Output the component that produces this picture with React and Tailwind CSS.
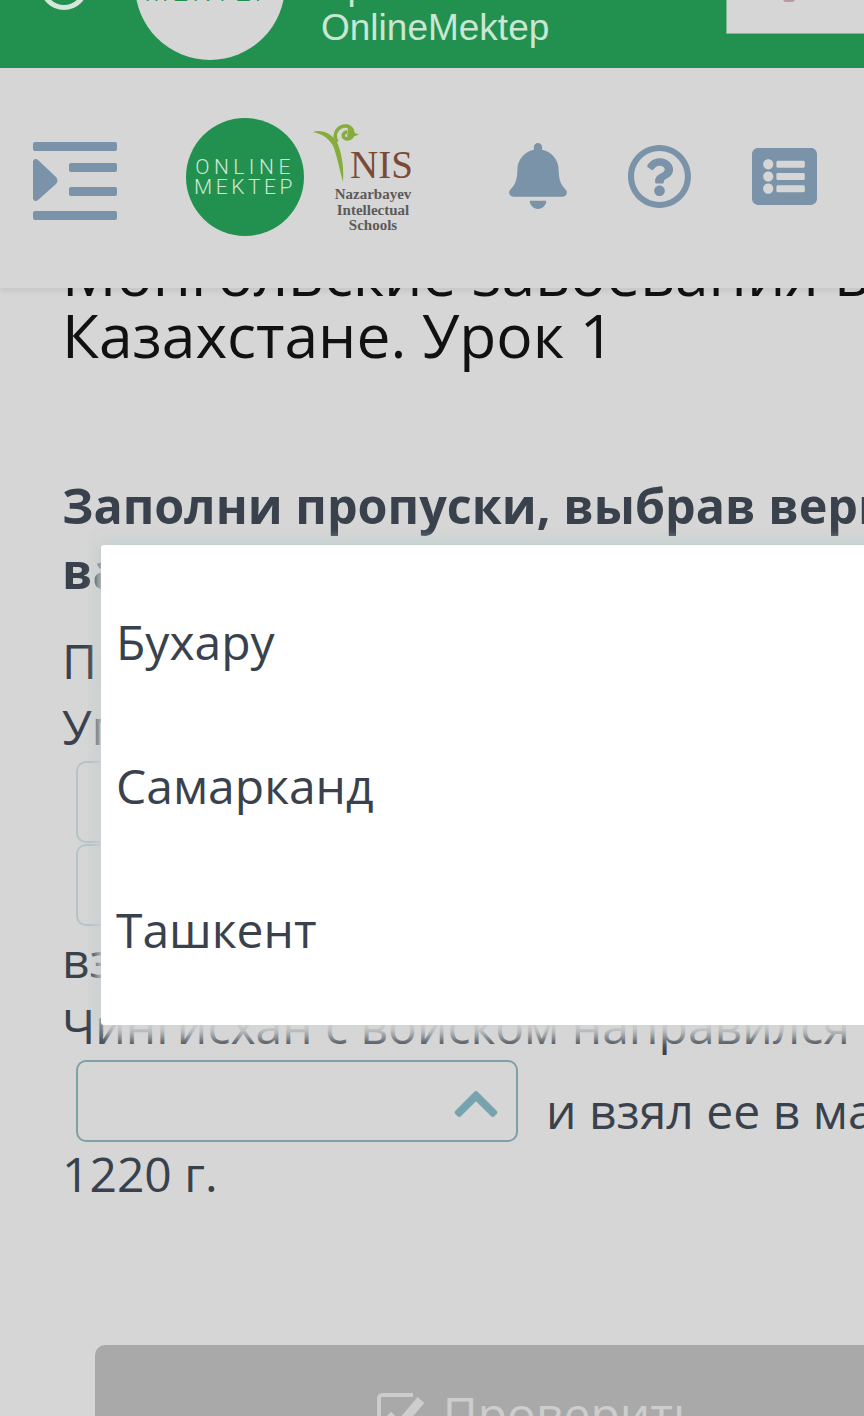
import { FaBell, FaRegQuestionCircle, FaListAlt, FaChevronUp } from "react-icons/fa";

function TopBanner() {
  return (
    <div className="relative z-20 flex h-[68px] overflow-hidden bg-[#22914f]">
      <div className="ml-[40px] mt-[-38px] h-[48px] w-[48px] rounded-full border-[5px] border-[#d6e6da]" />
      <div className="ml-[47px] mt-[-90px] flex h-[150px] w-[150px] shrink-0 items-end justify-center rounded-full bg-[#d6d6d6] pb-[54px]">
        <span className="font-['Roboto'] text-[28px] font-light leading-none tracking-[4px] text-[#22914f]">MEKTEP</span>
      </div>
      <div className="ml-[36px] mt-[-34px] font-['Liberation_Sans'] text-[37px] leading-[41px] text-[#c9e6d3]">
        <div>Привет</div>
        <div>OnlineMektep</div>
      </div>
      <div className="ml-auto flex h-[34px] w-[138px] justify-center border-b border-l border-[#7fb896] bg-[#d6d6d6]">
        <span className="ml-[-14px] mt-[-4px] h-[6px] w-[12px] rounded-full bg-[#b998a4]" />
      </div>
    </div>
  );
}

function NisLogo() {
  return (
    <div className="ml-[8px] mt-[-2px] flex w-[100px] shrink-0 flex-col self-start pt-[56px]">
      <div className="flex h-[60px] items-end">
        <svg viewBox="0 0 48 60" className="h-[60px] w-[48px] shrink-0" fill="none">
          <path d="M1 10 C10 7 20 12 25 20 C30 32 32 46 31 60 C28 50 26 38 22 26 C19 18 11 12 1 10 Z" fill="#86ad3a" />
          <path d="M25 20 C20 11 27 3 35 4 C43 6 43 17 35 17 C30 17 30 10 35 10" stroke="#86ad3a" strokeWidth="3.5" />
          <path d="M36 4 C38 8 42 12 47 12 C43 15 38 15 35 17" fill="#86ad3a" />
        </svg>
        <span className="ml-[-10px] font-['Liberation_Serif'] text-[39px] leading-[34px] text-[#7a4a34]">NIS</span>
      </div>
      <div className="mt-[5px] text-center font-['Liberation_Serif'] text-[15px] font-bold leading-[15.5px] text-[#5c5a58] pl-[22px]">
        <div>Nazarbayev</div>
        <div>Intellectual</div>
        <div>Schools</div>
      </div>
    </div>
  );
}

function Header() {
  return (
    <header className="relative z-10 flex h-[220px] items-center bg-[#d6d6d6] pl-[33px] shadow-[0_3px_6px_rgba(0,0,0,0.08)]">
      <svg viewBox="0 0 84 78" className="mt-[6px] h-[78px] w-[84px] shrink-0 fill-[#7b93a8]">
        <rect x="0" y="0" width="84" height="9" rx="2" />
        <rect x="36" y="21" width="48" height="9" rx="2" />
        <rect x="36" y="45" width="48" height="9" rx="2" />
        <rect x="0" y="69" width="84" height="9" rx="2" />
        <path d="M0 20 C0 17 3 16 5 18 L23 35 C25 37 25 40 23 42 L5 58 C3 60 0 59 0 56 Z" />
      </svg>
      <div className="ml-[69px] mt-[-2px] flex h-[118px] w-[118px] shrink-0 flex-col items-center justify-center rounded-full bg-[#22914f] font-['Roboto'] text-[21px] font-light leading-[20px] text-[#cfe8d6]">
        <span className="tracking-[4.5px]">ONLINE</span>
        <span className="tracking-[3.5px]">MEKTEP</span>
      </div>
      <NisLogo />
      <FaBell size={66} className="ml-[93px] mt-[-4px] shrink-0 text-[#7b93a8]" />
      <FaRegQuestionCircle size={65} className="ml-[56px] mt-[-3px] shrink-0 text-[#7b93a8]" />
      <FaListAlt size={65} className="ml-[60px] mt-[-3px] shrink-0 text-[#7b93a8]" />
    </header>
  );
}

function Blank({ border = "border-[#b5c4c7]" }) {
  return (
    <div className={`flex h-[82px] w-[442px] shrink-0 items-center justify-end rounded-[10px] border-2 pr-[15px] ${border}`}>
      <FaChevronUp size={50} className="mt-[6px] text-[#76a3ae]" />
    </div>
  );
}

export default function App() {
  return (
    <div className="relative h-[1416px] w-[864px] overflow-hidden bg-[#d6d6d6] font-['Open_Sans'] text-[#39424c]">
      <TopBanner />
      <Header />
      <main className="mt-[-46px] whitespace-nowrap pl-[62px]">
        <h1 className="text-[60.5px] font-normal leading-[62px] text-[#111]">
          <div>Монгольские завоевания в</div>
          <div>Казахстане. Урок 1</div>
        </h1>
        <h2 className="mt-[107px] text-[48.5px] font-bold leading-[65px]">
          <div>Заполни пропуски, выбрав верный</div>
          <div>вариант</div>
        </h2>
        <div className="mt-[25px] text-[48px] leading-[66px]">
          <div>При захвате Отрара</div>
          <div>Угедей</div>
          <div className="ml-[14px] mt-[1px] flex flex-col gap-[1px]">
            <Blank />
            <Blank />
          </div>
          <div className="mt-[1px]">взял город</div>
          <div>Чингисхан с войском направился</div>
          <div className="ml-[14px] mt-[1px] flex items-start gap-[28px]">
            <Blank border="border-[#7fa0a6]" />
            <span className="mt-[18px]">и взял ее в марте</span>
          </div>
          <div className="mt-[-3px]">1220 г.</div>
        </div>
      </main>
      <div className="ml-[95px] mt-[138px] flex h-[120px] w-[900px] justify-center rounded-t-[10px] bg-[#a9a9a9] pt-[38px] pr-[12px] text-[48px] text-[#cdcdcd]">
        <div className="flex items-start gap-[18px]">
          <svg viewBox="0 0 48 48" className="mt-[10px] h-[48px] w-[48px]" fill="none" stroke="currentColor">
            <path d="M36 2 H6 C3 2 2 3 2 6 V44 C2 47 3 48 6 48 H36" strokeWidth="4" />
            <path d="M11 22 L22 33 L44 7" strokeWidth="9" />
          </svg>
          <span className="leading-[62px]">Проверить</span>
        </div>
      </div>
      <div className="absolute left-[101px] top-[545px] z-30 flex h-[480px] w-[800px] flex-col rounded-[3px] bg-white pl-[15px] pt-[25px] text-[48px] leading-[144px] shadow-[0_16px_14px_-2px_rgba(214,214,214,0.9),-4px_0_14px_rgba(190,200,200,0.6),0_-5px_12px_rgba(200,212,212,0.8)]">
        <div>Бухару</div>
        <div>Самарканд</div>
        <div>Ташкент</div>
      </div>
    </div>
  );
}
